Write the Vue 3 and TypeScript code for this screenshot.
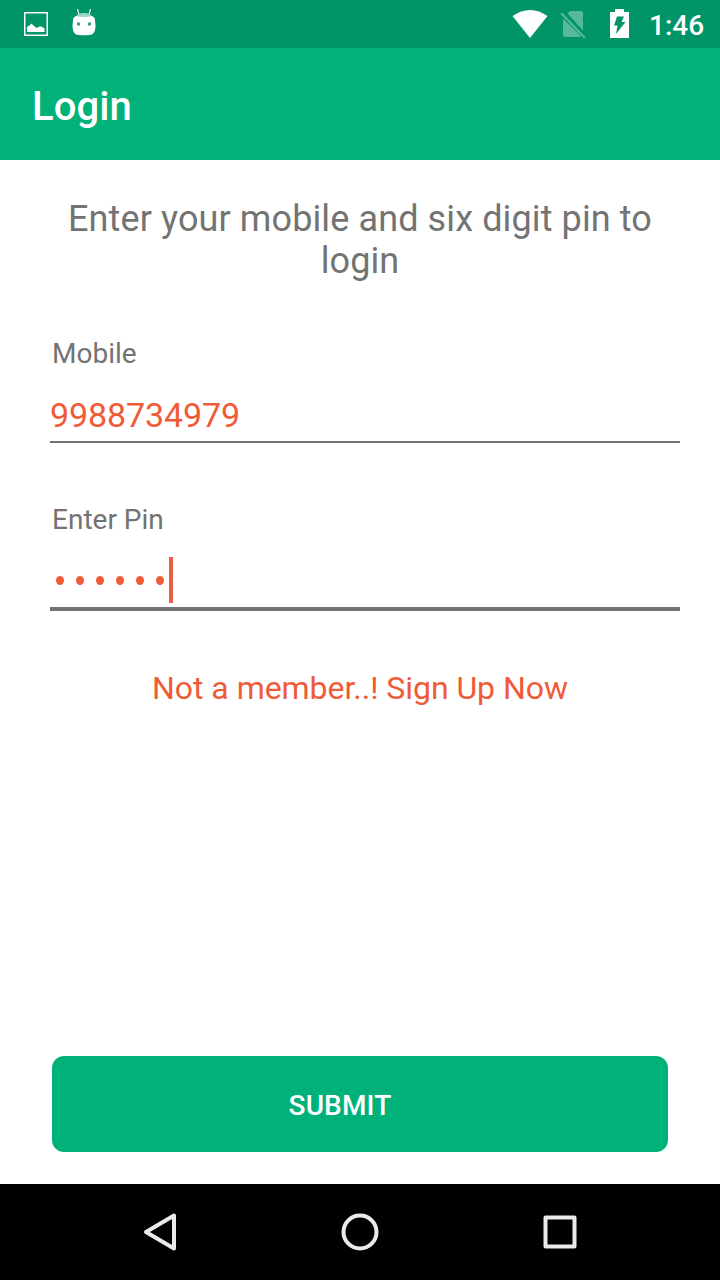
<script setup lang="ts">
import { ref } from 'vue'

const mobile = ref('9988734979')
const pinLength = 6
</script>

<template>
  <div class="screen">
    <div class="status">
      <svg class="status-icons" width="640" height="48" viewBox="0 0 640 48">
        <path d="M24.750 12.750h22.500v22.500h-22.500z" fill="none" stroke="#fff" stroke-width="1.500" />
        <path d="M27 32v-5l3-2 1.500-1.500 1.500 1.500 3.500 3 3-1.500h2l3 2V32z" fill="#fff" />
        <path d="M77.500 9l1.500 6M90.500 9l-1.500 6" stroke="#d8f0e8" stroke-width="1.300" />
        <path d="M76 17q1-4 8-4t8 4z" fill="#9dd6c3" />
        <path d="M73 20q0-3 3-4 8 2 16 0 3 1 3 4 1 6 0 10-1 5-6 5-5 .7-10 0-5 0-6-5-1-4 0-10z" fill="#fff" />
        <path d="M77 22.500h3v3h-3zM88 22.500h3v3h-3z" fill="#4b9b80" />
        <path d="M512.500 16Q530 4 547.500 16L530 38z" fill="#fff" />
        <g fill="#fff" opacity=".34">
          <path d="M567.500 13.500L570 11h11q2 0 2 2v17.500z" />
          <path d="M563 18.500L581 36q-.5 1-2 1h-14q-2 0-2-2z" />
          <path d="M560.500 14l1.500-1.500L585.500 37l-1.500 1.500z" />
        </g>
        <path d="M610 12h5V9h9v3h5v26h-19z" fill="#fff" />
        <path d="M617 16.500h7L621.500 22h4L616 34l1.500-8.500H614z" fill="#009468" />
      </svg>
      <span class="time">1:46</span>
    </div>
    <header class="bar">Login</header>
    <main class="content">
      <p class="intro">Enter your mobile and six digit pin to login</p>
      <label class="label">Mobile</label>
      <div class="field">{{ mobile }}</div>
      <label class="label pin-label">Enter Pin</label>
      <div class="field pin"><i v-for="n in pinLength" :key="n" class="dot"></i><i class="caret"></i></div>
      <a class="signup">Not a member..! Sign Up Now</a>
      <button class="submit">SUBMIT</button>
    </main>
    <nav class="nav">
      <svg width="720" height="96" viewBox="0 0 720 96" fill="none" stroke="#ebebeb" stroke-width="4" stroke-linejoin="round">
        <path d="M174 31.500v33L146 48z" />
        <circle cx="360" cy="48" r="16.500" />
        <rect x="545.500" y="33.500" width="29" height="29" />
      </svg>
    </nav>
  </div>
</template>

<style>
body { margin: 0; }
</style>
<style scoped>
.screen { width: 720px; height: 1280px; display: flex; flex-direction: column; background: #fff; font-family: Roboto, sans-serif; overflow: hidden; }
.status { height: 48px; background: #009468; display: flex; color: #fff; }
.status-icons { flex: none; }
.time { margin-left: 9px; font-size: 28px; line-height: 52px; font-weight: 500; }
.bar { height: 112px; box-sizing: border-box; padding-left: 32px; background: #00b27a; color: #fff; font-size: 40px; font-weight: 500; line-height: 118px; letter-spacing: .1px; }
.content { flex: 1; display: flex; flex-direction: column; padding: 0 40px 0 50px; }
.intro { margin: 38px 10px 0 0; text-align: center; font-size: 36px; line-height: 42px; letter-spacing: .11px; color: #737373; }
.label { margin: 55px 0 0 2px; height: 34px; line-height: 34px; font-size: 28px; color: #737373; }
.field { height: 72px; box-sizing: border-box; border-bottom: 2px solid #737373; font-size: 34px; line-height: 89px; letter-spacing: -.1px; color: #f05b37; }
.pin-label { margin-top: 60px; }
.pin { height: 74px; border-bottom-width: 4px; display: flex; padding: 20px 0 0 6px; }
.dot { width: 8px; height: 9px; border-radius: 50%; background: #f05b37; margin: 19px 12px 0 0; }
.caret { width: 4px; height: 46px; margin-left: -7px; background: #e85f43; }
.signup { margin: 56px 10px 0 0; text-align: center; font-size: 32px; line-height: 42px; letter-spacing: -.04px; color: #f05b37; }
.submit { width: 616px; height: 96px; margin: auto 0 32px 2px; padding: 2px 40px 0 0; border: 0; border-radius: 12px; background: #00b27a; color: #fff; font: 500 28px Roboto, sans-serif; letter-spacing: .15px; }
.nav { height: 96px; background: #000; }
.nav svg { display: block; }
</style>
